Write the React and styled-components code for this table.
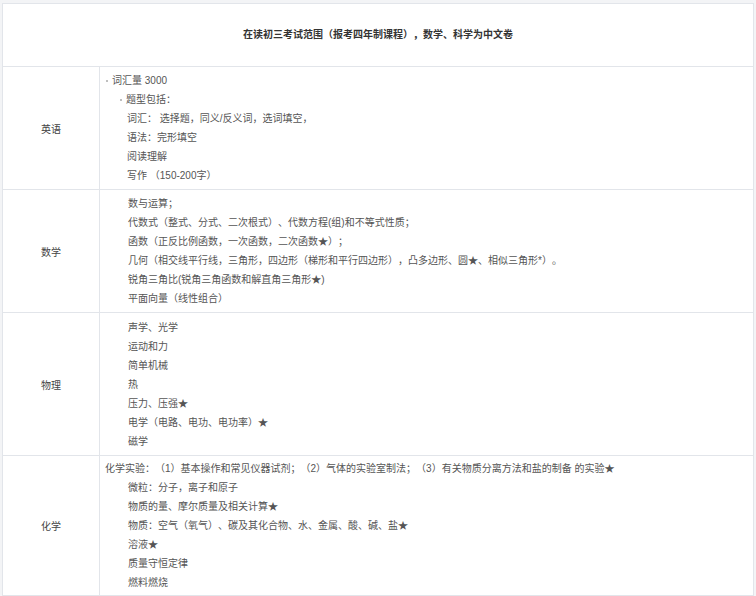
import styled, { createGlobalStyle } from 'styled-components';

const GlobalStyle = createGlobalStyle`
  html, body {
    margin: 0;
    padding: 0;
    background: #f3f4f6;
  }
  body {
    font-family: "Liberation Sans", "Noto Sans CJK SC", sans-serif;
    font-size: 10px;
    text-spacing-trim: space-all;
  }
`;

const Wrap = styled.div`
  padding: 3px 2px 0 2px;
`;

const Sheet = styled.div`
  width: 752px;
  box-sizing: border-box;
  display: grid;
  grid-template-columns: 97px 1fr;
  background: #fff;
  border-top: 1px solid #e2e5ea;
  border-left: 1px solid #e2e5ea;
`;

const HeaderCell = styled.div`
  grid-column: 1 / span 2;
  height: 63px;
  box-sizing: border-box;
  display: flex;
  align-items: center;
  justify-content: center;
  border-right: 1px solid #e2e5ea;
  border-bottom: 1px solid #e2e5ea;
  font-weight: bold;
  color: #333;
  line-height: 19px;
  padding-bottom: 1px;
`;

const SubjectCell = styled.div`
  display: flex;
  align-items: center;
  justify-content: center;
  border-right: 1px solid #e2e5ea;
  border-bottom: 1px solid #e2e5ea;
  color: #444;
`;

const TopicCell = styled.div`
  display: flex;
  flex-direction: column;
  justify-content: center;
  padding: ${(p) => p.$pad || 4}px 6px ${(p) => p.$pad || 4}px 5px;
  border-right: 1px solid #e2e5ea;
  border-bottom: 1px solid #e2e5ea;
  color: #555;
`;

const Line = styled.div`
  line-height: 19px;
  white-space: nowrap;
  padding-left: ${(p) => p.$indent || 0}px;
  display: flex;
  align-items: center;
`;

const Bullet = styled.span`
  display: inline-block;
  width: 2px;
  height: 2px;
  border-radius: 50%;
  background: #aaa;
  margin: 0 4px 0 1px;
`;

const rows = [
  {
    subject: '英语',
    lines: [
      { text: '词汇量 3000', bullet: true, indent: 0 },
      { text: '题型包括：', bullet: true, indent: 14 },
      { text: '词汇： 选择题，同义/反义词，选词填空，', indent: 22 },
      { text: '语法：完形填空', indent: 22 },
      { text: '阅读理解', indent: 22 },
      { text: '写作 （150-200字）', indent: 22 },
    ],
  },
  {
    subject: '数学',
    lines: [
      '数与运算；',
      '代数式（整式、分式、二次根式）、代数方程(组)和不等式性质；',
      '函数（正反比例函数，一次函数，二次函数★）；',
      '几何（相交线平行线，三角形，四边形（梯形和平行四边形），凸多边形、圆★、相似三角形*）。',
      '锐角三角比(锐角三角函数和解直角三角形★)',
      '平面向量（线性组合）',
    ],
  },
  {
    subject: '物理',
    pad: 4.5,
    lines: ['声学、光学', '运动和力', '简单机械', '热', '压力、压强★', '电学（电路、电功、电功率）★', '磁学'],
  },
  {
    subject: '化学',
    pad: 3,
    lines: [
      { text: '化学实验：（1）基本操作和常见仪器试剂；（2）气体的实验室制法；（3）有关物质分离方法和盐的制备 的实验★', indent: 0 },
      '微粒：分子，离子和原子',
      '物质的量、摩尔质量及相关计算★',
      '物质：空气（氧气）、碳及其化合物、水、金属、酸、碱、盐★',
      '溶液★',
      '质量守恒定律',
      '燃料燃烧',
    ],
  },
];

export default function App() {
  return (
    <>
      <GlobalStyle />
      <Wrap>
        <Sheet>
          <HeaderCell>在读初三考试范围（报考四年制课程），数学、科学为中文卷</HeaderCell>
          {rows.map((r) => (
            <>
              <SubjectCell key={r.subject + '-s'}>{r.subject}</SubjectCell>
              <TopicCell key={r.subject + '-t'} $pad={r.pad}>
                {r.lines.map((l, i) => {
                  const line = typeof l === 'string' ? { text: l, indent: 23 } : l;
                  return (
                    <Line key={i} $indent={line.indent}>
                      {line.bullet && <Bullet />}
                      {line.text}
                    </Line>
                  );
                })}
              </TopicCell>
            </>
          ))}
        </Sheet>
      </Wrap>
    </>
  );
}
